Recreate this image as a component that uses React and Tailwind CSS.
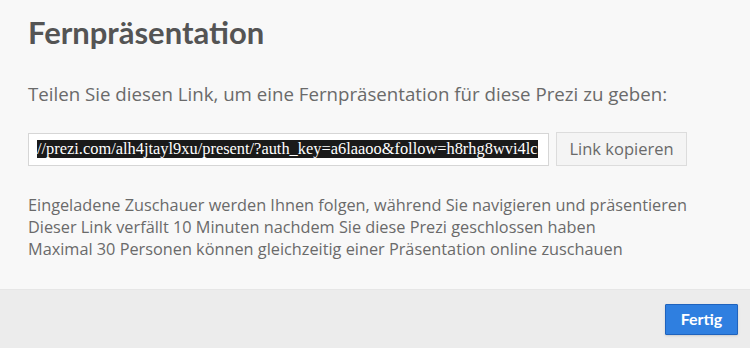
export default function App() {
  const lato = { fontFamily: '"Lato", "Open Sans", sans-serif' };
  const open = { fontFamily: '"Open Sans", "Lato", sans-serif' };
  return (
    <div className="w-[750px] h-[348px] bg-[#f8f8f8] flex flex-col overflow-hidden" style={lato}>
      <div className="flex-1 px-[28px] pt-[12px]">
        <h1 className="text-[31px] leading-[40px] font-bold text-[#545454]">Fernpräsentation</h1>
        <p className="mt-[29px] text-[18.7px] leading-[26px] text-[#6a6a6a]" style={open}>
          Teilen Sie diesen Link, um eine Fernpräsentation für diese Prezi zu geben:
        </p>
        <div className="mt-[25px] flex items-center gap-[7px]">
          <div className="w-[521px] h-[33px] border border-[#d6d6d6] bg-white flex items-center pl-[8px] pr-[6px] overflow-hidden">
            <span
              className="bg-[#1a1a1a] text-white text-[16.4px] leading-[18px] whitespace-nowrap"
              style={{ fontFamily: '"Liberation Serif", serif' }}
            >
              //prezi.com/alh4jtayl9xu/present/?auth_key=a6laaoo&amp;follow=h8rhg8wvi4lc
            </span>
          </div>
          <button className="h-[34px] w-[131px] border border-[#dcdcdc] bg-[#f4f4f4] text-[16.5px] text-[#6a6a6a]" style={open}>
            Link kopieren
          </button>
        </div>
        <div className="mt-[28px] text-[16.3px] leading-[22px] text-[#6a6a6a]" style={open}>
          <p>Eingeladene Zuschauer werden Ihnen folgen, während Sie navigieren und präsentieren</p>
          <p>Dieser Link verfällt 10 Minuten nachdem Sie diese Prezi geschlossen haben</p>
          <p>Maximal 30 Personen können gleichzeitig einer Präsentation online zuschauen</p>
        </div>
      </div>
      <div className="h-[59px] bg-[#ececec] border-t border-[#e6e6e6] flex items-center justify-end pr-[12px]">
        <button className="h-[31px] w-[73px] bg-[#2f7fe0] border border-[#1f63bd] text-white text-[16px] font-bold rounded-[1px] shadow-sm">
          Fertig
        </button>
      </div>
    </div>
  );
}
